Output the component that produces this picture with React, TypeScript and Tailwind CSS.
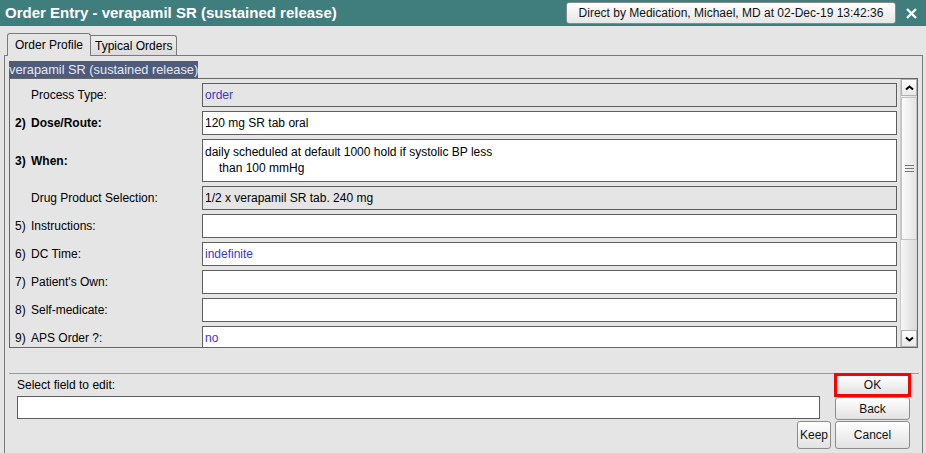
import React from 'react';

type Row = {
  num?: string;
  label: string;
  value?: string;
  bold?: boolean;
  gray?: boolean;
  blue?: boolean;
  tall?: boolean;
};

const rows: Row[] = [
  { label: 'Process Type:', value: 'order', gray: true, blue: true },
  { num: '2)', label: 'Dose/Route:', value: '120 mg SR tab oral', bold: true },
  { num: '3)', label: 'When:', bold: true, tall: true },
  { label: 'Drug Product Selection:', value: '1/2 x verapamil SR tab. 240 mg', gray: true },
  { num: '5)', label: 'Instructions:' },
  { num: '6)', label: 'DC Time:', value: 'indefinite', blue: true },
  { num: '7)', label: "Patient's Own:" },
  { num: '8)', label: 'Self-medicate:' },
  { num: '9)', label: 'APS Order ?:', value: 'no', blue: true },
];

const btn =
  'flex items-center justify-center rounded-[3px] border border-[#8c8c8c] bg-gradient-to-b from-[#ffffff] to-[#e2e2e2] text-[12px] text-[#111]';

const Chevron = ({ down }: { down?: boolean }) => (
  <svg width="9" height="6" viewBox="0 0 9 6">
    <path
      d={down ? 'M1 1.5 L4.5 4.5 L8 1.5' : 'M1 4.5 L4.5 1.5 L8 4.5'}
      fill="none"
      stroke="#000"
      strokeWidth="2"
    />
  </svg>
);

const FieldRow = ({ row }: { row: Row }) => (
  <div className={`flex shrink-0 ${row.tall ? 'h-[43px]' : 'h-[24px]'}`}>
    <div
      className={`w-[192px] flex items-center pl-[5px] ${row.bold ? 'font-bold' : ''}`}
    >
      <span className="w-[16px] shrink-0">{row.num}</span>
      <span>{row.label}</span>
    </div>
    <div
      className={`w-[695px] border border-[#5e5e5e] px-[2px] ${
        row.gray ? 'bg-[#e5e5e5]' : 'bg-white'
      } ${row.blue ? 'text-[#3838c4]' : 'text-black'} ${
        row.tall ? 'pt-[4px] leading-[16px]' : 'flex items-center'
      }`}
    >
      {row.tall ? (
        <>
          <div>daily scheduled at default 1000 hold if systolic BP less</div>
          <div className="pl-[14px]">than 100 mmHg</div>
        </>
      ) : (
        row.value
      )}
    </div>
  </div>
);

export default function App() {
  return (
    <div
      className="w-[926px] h-[453px] overflow-hidden bg-[#e5e5e5] flex flex-col text-[12px] text-black"
      style={{ fontFamily: '"Liberation Sans", Arial, sans-serif' }}
    >
      {/* title bar */}
      <div className="h-[26px] shrink-0 bg-[#407d7d] flex items-center pl-[5px]">
        <span className="text-[15px] font-bold text-white">
          Order Entry - verapamil SR (sustained release)
        </span>
        <div className="ml-auto h-[22px] w-[330px] rounded-[3px] border border-[#8a8a8a] bg-gradient-to-b from-[#ffffff] to-[#e6e6e6] flex items-center justify-center text-[12px] text-[#111]">
          Direct by Medication, Michael, MD at 02-Dec-19 13:42:36
        </div>
        <div className="w-[30px] flex justify-center">
          <svg width="11" height="11" viewBox="0 0 11 11">
            <path d="M1 1 L10 10 M10 1 L1 10" stroke="#fff" strokeWidth="2.4" />
          </svg>
        </div>
      </div>

      {/* tabs */}
      <div className="flex items-end h-[29px] pt-[7px] pl-[7px] shrink-0">
        <div className="relative z-10 -mb-[1px] h-[23px] px-[7px] flex items-center border border-b-0 border-[#7a7a7a] rounded-t-[3px] bg-[#e5e5e5]">
          Order Profile
        </div>
        <div className="h-[20px] px-[4px] flex items-center border border-b-0 border-l-0 border-[#7a7a7a] rounded-tr-[3px] bg-gradient-to-b from-[#ececec] to-[#dcdcdc]">
          Typical Orders
        </div>
      </div>

      {/* tab panel */}
      <div className="ml-[4px] w-[919px] flex-1 border border-b-0 border-[#7a7a7a] pl-[4px] pt-[5px]">
        <div className="w-fit bg-[#4e5b7a] text-[#e6e9f2] text-[12.8px] leading-[17px] h-[17px]">
          verapamil SR (sustained release)
        </div>

        {/* scroll box */}
        <div className="w-[909px] h-[270px] border border-[#666] flex overflow-hidden">
          <div className="w-[890px] pt-[4px] flex flex-col gap-[4px] overflow-hidden">
            {rows.map((r, i) => (
              <FieldRow key={i} row={r} />
            ))}
          </div>
          <div className="w-[17px] flex flex-col bg-gradient-to-r from-[#f7f7f7] to-[#dadada] border-l border-[#c8c8c8]">
            <div className="h-[17px] shrink-0 flex items-center justify-center border border-[#b0b0b0] bg-gradient-to-b from-[#ffffff] to-[#e8e8e8]">
              <Chevron />
            </div>
            <div className="mt-[1px] h-[143px] shrink-0 flex items-center justify-center border border-[#c4c4c4] bg-gradient-to-r from-[#fbfbfb] to-[#e4e4e4]">
              <div className="flex flex-col gap-[2px]">
                <div className="w-[9px] h-[1px] bg-[#777]" />
                <div className="w-[9px] h-[1px] bg-[#777]" />
                <div className="w-[9px] h-[1px] bg-[#777]" />
              </div>
            </div>
            <div className="flex-1" />
            <div className="h-[17px] shrink-0 flex items-center justify-center border border-[#b0b0b0] bg-gradient-to-b from-[#ffffff] to-[#e8e8e8]">
              <Chevron down />
            </div>
          </div>
        </div>

        {/* bottom */}
        <div className="mt-[25px] w-[910px] h-[1px] bg-[#999]" />
        <div className="w-[902px]">
          <div className="flex items-end justify-between h-[24px] -mt-[1px]">
            <span className="pl-[8px] pb-[3px]">Select field to edit:</span>
            <div className={`${btn} w-[77px] h-[24px] !border-[3px] !border-[#f00] !rounded-none`}>OK</div>
          </div>
          <div className="flex justify-between h-[23px]">
            <div className="ml-[8px] -mt-[1px] w-[803px] h-[23px] border border-[#5e5e5e] bg-white" />
            <div className={`${btn} w-[75px] h-[23px] mr-[1px]`}>Back</div>
          </div>
          <div className="flex justify-end gap-[4px] mt-[1px]">
            <div className={`${btn} w-[34px] h-[28px]`}>Keep</div>
            <div className={`${btn} w-[75px] h-[28px] mr-[1px]`}>Cancel</div>
          </div>
        </div>
      </div>
    </div>
  );
}
